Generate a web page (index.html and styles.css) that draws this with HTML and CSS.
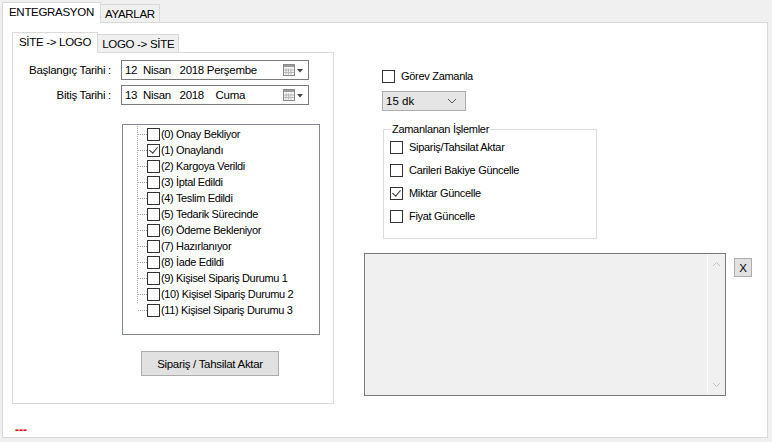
FILE: index.html
```html
<!DOCTYPE html>
<html lang="tr">
<head>
  <meta charset="UTF-8">
  <title>Entegrasyon</title>
  <link rel="stylesheet" href="styles.css">
</head>
<body>
  <div class="window">
    <!-- Outer tabs -->
    <div class="tabs">
      <div class="tab active">ENTEGRASYON</div>
      <div class="tab">AYARLAR</div>
    </div>

    <div class="panel">
      <div class="left">
        <div class="tabs inner-tabs">
          <div class="tab active">SİTE -&gt; LOGO</div>
          <div class="tab">LOGO -&gt; SİTE</div>
        </div>
        <div class="inner-panel">
          <div class="form-row">
            <label class="form-label">Başlangıç Tarihi :</label>
            <div class="datepicker">
              <span class="date-text">12&nbsp;&nbsp;Nisan&nbsp;&nbsp;&nbsp;2018 Perşembe</span>
              <span class="cal-btn">
                <svg width="22" height="12" viewBox="0 0 22 12">
                  <rect x="0.5" y="0.5" width="11" height="11" fill="#f4f4f4" stroke="#8a8a8a"/>
                  <rect x="1" y="1" width="10" height="2" fill="#9a9a9a"/>
                  <path d="M3 4.5v6M5.5 4.5v6M8 4.5v6M1 6h10M1 8.5h10" stroke="#b8b8b8" stroke-width="1"/>
                  <path d="M14 5h6l-3 3.5z" fill="#444"/>
                </svg>
              </span>
            </div>
          </div>
          <div class="form-row">
            <label class="form-label">Bitiş Tarihi :</label>
            <div class="datepicker">
              <span class="date-text">13&nbsp;&nbsp;Nisan&nbsp;&nbsp;&nbsp;2018&nbsp;&nbsp;&nbsp;&nbsp;Cuma</span>
              <span class="cal-btn">
                <svg width="22" height="12" viewBox="0 0 22 12">
                  <rect x="0.5" y="0.5" width="11" height="11" fill="#f4f4f4" stroke="#8a8a8a"/>
                  <rect x="1" y="1" width="10" height="2" fill="#9a9a9a"/>
                  <path d="M3 4.5v6M5.5 4.5v6M8 4.5v6M1 6h10M1 8.5h10" stroke="#b8b8b8" stroke-width="1"/>
                  <path d="M14 5h6l-3 3.5z" fill="#444"/>
                </svg>
              </span>
            </div>
          </div>

          <div class="tree">
            <ul class="tree-list">
              <li><span class="cb"></span>(0) Onay Bekliyor</li>
              <li><span class="cb checked"></span>(1) Onaylandı</li>
              <li><span class="cb"></span>(2) Kargoya Verildi</li>
              <li><span class="cb"></span>(3) İptal Edildi</li>
              <li><span class="cb"></span>(4) Teslim Edildi</li>
              <li><span class="cb"></span>(5) Tedarik Sürecinde</li>
              <li><span class="cb"></span>(6) Ödeme Bekleniyor</li>
              <li><span class="cb"></span>(7) Hazırlanıyor</li>
              <li><span class="cb"></span>(8) İade Edildi</li>
              <li><span class="cb"></span>(9) Kişisel Sipariş Durumu 1</li>
              <li><span class="cb"></span>(10) Kişisel Sipariş Durumu 2</li>
              <li class="last"><span class="cb"></span>(11) Kişisel Sipariş Durumu 3</li>
            </ul>
          </div>

          <button class="btn transfer-btn">Sipariş / Tahsilat Aktar</button>
        </div>
      </div>

      <div class="right">
        <div class="schedule">
          <div class="check-row"><span class="cb"></span>Görev Zamanla</div>
          <div class="combo">
            <span>15 dk</span>
            <svg width="10" height="6" viewBox="0 0 10 6"><path d="M1 1l4 4 4-4" fill="none" stroke="#555" stroke-width="1"/></svg>
          </div>
          <fieldset class="group">
            <legend>Zamanlanan İşlemler</legend>
            <div class="check-row"><span class="cb"></span>Sipariş/Tahsilat Aktar</div>
            <div class="check-row"><span class="cb"></span>Carileri Bakiye Güncelle</div>
            <div class="check-row"><span class="cb checked"></span>Miktar Güncelle</div>
            <div class="check-row"><span class="cb"></span>Fiyat Güncelle</div>
          </fieldset>
        </div>

        <div class="log-row">
          <div class="log">
            <div class="scrollbar">
              <svg width="9" height="6" viewBox="0 0 9 6"><path d="M1 5l3.5-3.5L8 5" fill="none" stroke="#c2c2c2" stroke-width="1"/></svg>
              <svg width="9" height="6" viewBox="0 0 9 6"><path d="M1 1l3.5 3.5L8 1" fill="none" stroke="#c2c2c2" stroke-width="1"/></svg>
            </div>
          </div>
          <button class="btn close-btn">X</button>
        </div>
      </div>

      <div class="status">---</div>
    </div>
  </div>
</body>
</html>
```

FILE: styles.css
```css
body {
  margin: 0;
  background: #f0f0f0;
  font-family: "Liberation Sans", Arial, sans-serif;
  font-size: 11px;
  color: #000;
}

.window {
  padding: 2px 0 0 2px;
  width: 766px;
}

.tabs {
  display: flex;
  align-items: flex-end;
  height: 20px;
}

.tab {
  height: 17px;
  line-height: 18px;
  padding: 0 4px;
  background: #f0f0f0;
  border: 1px solid #d9d9d9;
  border-bottom: none;
  margin-left: -1px;
  font-size: 11.5px;
  letter-spacing: -0.3px;
}

.tab.active {
  height: 20px;
  line-height: 19px;
  background: #fff;
  margin-left: 0;
  padding: 0 6px;
  position: relative;
  z-index: 1;
  margin-bottom: -1px;
}

.panel {
  position: relative;
  display: flex;
  height: 414px;
  background: #fff;
  border: 1px solid #d9d9d9;
}

.left {
  margin: 9px 0 0 9px;
}

.inner-panel {
  width: 320px;
  height: 350px;
  border: 1px solid #d9d9d9;
  display: flex;
  flex-direction: column;
}

.form-row {
  display: flex;
  align-items: center;
  margin-top: 7px;
}

.form-row + .form-row {
  margin-top: 5px;
}

.form-label {
  width: 98px;
  text-align: right;
  padding-right: 10px;
  font-size: 11.5px;
  letter-spacing: -0.3px;
}

.datepicker {
  width: 186px;
  height: 18px;
  border: 1px solid #7a7a7a;
  display: flex;
  align-items: center;
  justify-content: space-between;
  font-size: 11.5px;
  letter-spacing: -0.3px;
}

.date-text {
  padding-left: 3px;
}

.cal-btn {
  display: flex;
  padding-right: 3px;
}

.tree {
  margin: 19px 0 0 109px;
  width: 196px;
  height: 209px;
  border: 1px solid #828790;
}

.tree-list {
  list-style: none;
  margin: 1px 0 0 14px;
  padding: 0;
  border-left: 1px dotted #a0a0a0;
  height: 177px;
}

.tree-list li {
  height: 16px;
  display: flex;
  align-items: center;
  font-size: 11px;
  letter-spacing: -0.35px;
}

.tree-list li::before {
  content: "";
  width: 9px;
  border-top: 1px dotted #a0a0a0;
}

.tree-list li .cb {
  margin-right: 1px;
}

.cb {
  display: inline-block;
  box-sizing: border-box;
  width: 13px;
  height: 13px;
  border: 1px solid #333;
  background: #fff;
  position: relative;
  flex: none;
}

.cb.checked::after {
  content: "";
  position: absolute;
  left: 3px;
  top: 0px;
  width: 4px;
  height: 7px;
  border: solid #333;
  border-width: 0 1px 1px 0;
  transform: rotate(40deg);
}

.btn {
  font-family: "Liberation Sans", Arial, sans-serif;
  font-size: 11.5px;
  letter-spacing: -0.3px;
  background: #e1e1e1;
  border: 1px solid #adadad;
  color: #000;
  padding: 0;
}

.transfer-btn {
  width: 138px;
  height: 25px;
  margin: 16px 0 0 128px;
}

.right {
  margin: 45px 0 0 30px;
  display: flex;
  flex-direction: column;
}

.schedule {
  margin-left: 18px;
}

.check-row {
  display: flex;
  align-items: center;
  font-size: 11px;
  letter-spacing: -0.3px;
  height: 16px;
}

.check-row .cb {
  margin-right: 6px;
}

.combo {
  margin-top: 7px;
  height: 18px;
  background: #e5e5e5;
  border: 1px solid #adadad;
  display: flex;
  align-items: center;
  justify-content: space-between;
  padding: 0 8px 0 3px;
  width: 71px;
  font-size: 11.5px;
}

.group {
  margin: 12px 0 0 1px;
  width: 206px;
  height: 114px;
  border: 1px solid #dcdcdc;
  padding: 0 0 0 6px;
  display: flex;
  flex-direction: column;
}

.group legend {
  padding: 0 1px;
  margin-left: 1px;
  font-size: 11px;
  letter-spacing: -0.3px;
}

.group .check-row {
  margin-top: 7px;
  height: 16px;
}

.group .check-row:first-of-type {
  margin-top: 4px;
}

.log-row {
  display: flex;
  margin-top: 14px;
}

.log {
  width: 360px;
  height: 141px;
  background: #f0f0f0;
  border: 1px solid #7a7a7a;
  display: flex;
  justify-content: flex-end;
}

.scrollbar {
  width: 17px;
  border-left: 1px solid #fbfbfb;
  display: flex;
  flex-direction: column;
  justify-content: space-between;
  align-items: center;
  padding: 7px 0;
}

.close-btn {
  width: 18px;
  height: 19px;
  margin: 5px 0 0 8px;
}

.status {
  position: absolute;
  left: 12px;
  bottom: 0;
  color: #f00000;
  font-size: 12px;
  font-weight: bold;
}
```
